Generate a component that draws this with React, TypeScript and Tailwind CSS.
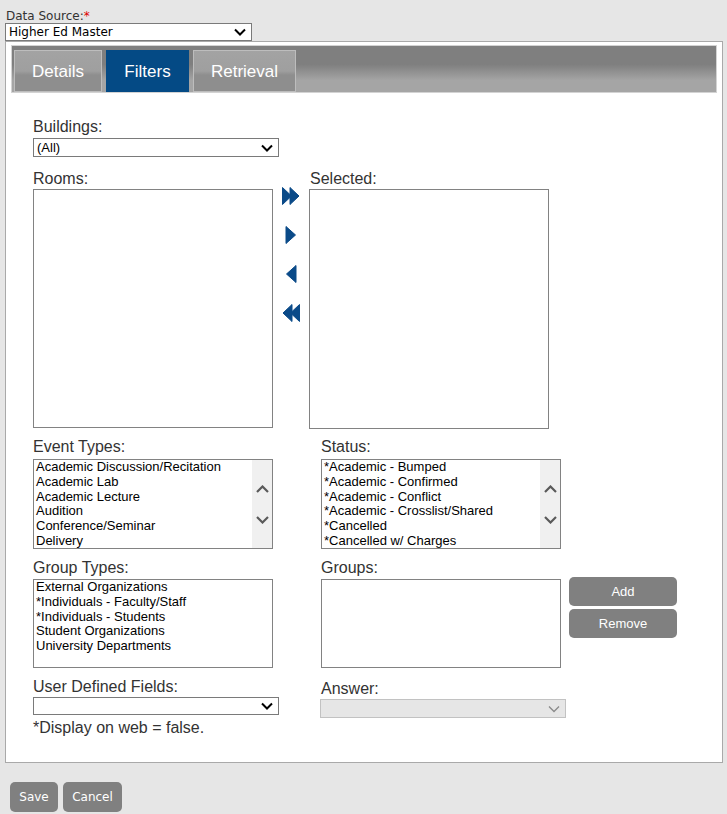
import React from 'react';

const arial = "font-['Liberation_Sans',Arial,sans-serif]";
const verdana = "font-['DejaVu_Sans',Verdana,sans-serif]";

function Chevron({ color = '#000', width = 2 }: { color?: string; width?: number }) {
  return (
    <svg width="12" height="8" viewBox="0 0 12 8" className="shrink-0">
      <path d="M1 1.5 L6 6.5 L11 1.5" fill="none" stroke={color} strokeWidth={width} />
    </svg>
  );
}

function FakeSelect({
  value,
  className,
  disabled,
  font = arial,
  size = 'text-[13px]',
}: {
  value?: string;
  className: string;
  disabled?: boolean;
  font?: string;
  size?: string;
}) {
  return (
    <div
      className={`flex items-center justify-between border pl-[3px] pr-[5px] ${
        disabled ? 'border-[#c2c2c2] bg-[#e6e6e6]' : 'border-[#7a7a7a] bg-white'
      } ${className}`}
    >
      <span className={`${font} ${size} leading-none text-black`}>{value}</span>
      <Chevron color={disabled ? '#8a8a8a' : '#000'} width={disabled ? 1.3 : 2} />
    </div>
  );
}

function ScrollList({ items }: { items: string[] }) {
  return (
    <div className="flex h-[90px] w-[240px] overflow-hidden border border-[#828282] bg-white">
      <div className={`${arial} flex-1 overflow-hidden pl-[2px] text-[13px] leading-[14.8px] text-black`}>
        {items.map((item) => (
          <div key={item} className="whitespace-nowrap">
            {item}
          </div>
        ))}
      </div>
      <div className="flex w-[20px] flex-col items-center justify-center gap-[23px] bg-[#f0f0f0]">
        <svg width="13" height="8" viewBox="0 0 13 8">
          <path d="M1 7 L6.5 1.5 L12 7" fill="none" stroke="#5a5a5a" strokeWidth={2.2} />
        </svg>
        <svg width="13" height="8" viewBox="0 0 13 8">
          <path d="M1 1 L6.5 6.5 L12 1" fill="none" stroke="#5a5a5a" strokeWidth={2.2} />
        </svg>
      </div>
    </div>
  );
}

function PlainList({ items, className }: { items: string[]; className: string }) {
  return (
    <div
      className={`${arial} overflow-hidden border border-[#828282] bg-white pl-[2px] text-[13px] leading-[14.8px] text-black ${className}`}
    >
      {items.map((item) => (
        <div key={item} className="whitespace-nowrap">
          {item}
        </div>
      ))}
    </div>
  );
}

// labels sit low in their 18px box, like the original page
function Label({ children, className = '' }: { children: React.ReactNode; className?: string }) {
  return (
    <div className={`${arial} h-[18px] whitespace-nowrap text-[16px] leading-[22px] text-[#333] ${className}`}>
      {children}
    </div>
  );
}

function Arrow({ dir, double }: { dir: 'left' | 'right'; double?: boolean }) {
  const flip = dir === 'left' ? 'scale(-1,1) translate(-18,0)' : undefined;
  return (
    <svg width="18" height="18" viewBox="0 0 18 18">
      <g transform={flip} fill="#0a4a88">
        {double ? (
          <>
            <path d="M0.5 0.5 L9.5 9 L0.5 17.5 Z" strokeLinejoin="round" stroke="#0a4a88" strokeWidth={1} />
            <path d="M8 0.5 L17 9 L8 17.5 Z" strokeLinejoin="round" stroke="#0a4a88" strokeWidth={1} />
          </>
        ) : (
          <path d="M4 0.5 L13.5 9 L4 17.5 Z" strokeLinejoin="round" stroke="#0a4a88" strokeWidth={1} />
        )}
      </g>
    </svg>
  );
}

function Tab({ label, active, w }: { label: string; active?: boolean; w: string }) {
  return (
    <div
      className={`${arial} flex h-[42px] items-center justify-center pt-[2px] text-[17px] text-white ${w} ${
        active
          ? 'bg-[#044a85]'
          : 'border border-[#bdbdbd] bg-[linear-gradient(#a3a3a3_0%,#9f9f9f_50%,#8e8e8e_60%,#8e8e8e_100%)]'
      }`}
    >
      {label}
    </div>
  );
}

function GrayButton({ children, className }: { children: React.ReactNode; className: string }) {
  return (
    <div className={`flex items-center justify-center rounded-[5px] bg-[#808080] text-white ${className}`}>
      {children}
    </div>
  );
}

export default function App() {
  return (
    <div className="min-h-[814px] bg-[#e6e6e6] pl-[5px] pt-[9px]">
      <div className={`${verdana} h-[14px] pl-[1px] text-[12px] leading-[14px] text-[#333]`}>
        Data Source:<span className="text-[#e00000]">*</span>
      </div>
      <FakeSelect
        value="Higher Ed Master"
        className="h-[18px] w-[247px]"
        font={verdana}
        size="text-[12px]"
      />

      <div className="w-[718px] border border-[#a9a9a9] bg-white px-[5px] pt-[3px] pb-[27px]">
        <div className="flex h-[48px] items-end gap-[4px] border border-[#d3d3d3] bg-[linear-gradient(#7f7f7f_0%,#7f7f7f_40%,#a5a5a5_75%,#a5a5a5_100%)] pl-[2px]">
          <Tab label="Details" w="w-[88px]" />
          <Tab label="Filters" w="w-[83px]" active />
          <Tab label="Retrieval" w="w-[103px]" />
        </div>

        <div className="pl-[22px] pt-[23px]">
          <Label>Buildings:</Label>
          <FakeSelect value="(All)" className="mt-[4px] h-[19px] w-[246px]" />

          <div className="mt-[11px] flex">
            <div className="w-[240px]">
              <Label>Rooms:</Label>
              <div className="mt-[3px] h-[239px] border border-[#828282] bg-white" />
            </div>
            <div className="flex w-[36px] flex-col items-center gap-[21px] pt-[19px]">
              <Arrow dir="right" double />
              <Arrow dir="right" />
              <Arrow dir="left" />
              <Arrow dir="left" double />
            </div>
            <div className="w-[240px]">
              <Label className="pl-[1px]">Selected:</Label>
              <div className="mt-[3px] h-[240px] border border-[#828282] bg-white" />
            </div>
          </div>

          <div className="mt-[7px] flex gap-[48px]">
            <div>
              <Label>Event Types:</Label>
              <div className="mt-[5px]">
                <ScrollList
                  items={[
                    'Academic Discussion/Recitation',
                    'Academic Lab',
                    'Academic Lecture',
                    'Audition',
                    'Conference/Seminar',
                    'Delivery',
                  ]}
                />
              </div>
            </div>
            <div>
              <Label>Status:</Label>
              <div className="mt-[5px]">
                <ScrollList
                  items={[
                    '*Academic - Bumped',
                    '*Academic - Confirmed',
                    '*Academic - Conflict',
                    '*Academic - Crosslist/Shared',
                    '*Cancelled',
                    '*Cancelled w/ Charges',
                  ]}
                />
              </div>
            </div>
          </div>

          <div className="mt-[8px] flex gap-[48px]">
            <div>
              <Label>Group Types:</Label>
              <PlainList
                className="mt-[4px] h-[89px] w-[240px]"
                items={[
                  'External Organizations',
                  '*Individuals - Faculty/Staff',
                  '*Individuals - Students',
                  'Student Organizations',
                  'University Departments',
                ]}
              />
            </div>
            <div>
              <Label>Groups:</Label>
              <div className="flex">
                <div className="mt-[4px] h-[89px] w-[240px] border border-[#828282] bg-white" />
                <div className={`${arial} ml-[8px] mt-[2px] flex flex-col gap-[3px] text-[13px]`}>
                  <GrayButton className="h-[29px] w-[108px]">Add</GrayButton>
                  <GrayButton className="h-[29px] w-[108px]">Remove</GrayButton>
                </div>
              </div>
            </div>
          </div>

          <div className="mt-[8px] flex gap-[48px]">
            <div className="w-[240px]">
              <Label>User Defined Fields:</Label>
              <FakeSelect className="mt-[3px] h-[18px] w-[246px]" />
              <Label className="mt-[2px]">*Display on web = false.</Label>
            </div>
            <div className="pt-[2px]">
              <Label>Answer:</Label>
              <FakeSelect className="-ml-[1px] mt-[3px] h-[19px] w-[246px]" disabled />
            </div>
          </div>
        </div>
      </div>

      <div className={`${verdana} ml-[5px] mt-[19px] flex gap-[5px] text-[12px]`}>
        <GrayButton className="h-[30px] w-[48px]">Save</GrayButton>
        <GrayButton className="h-[30px] w-[59px]">Cancel</GrayButton>
      </div>
    </div>
  );
}
